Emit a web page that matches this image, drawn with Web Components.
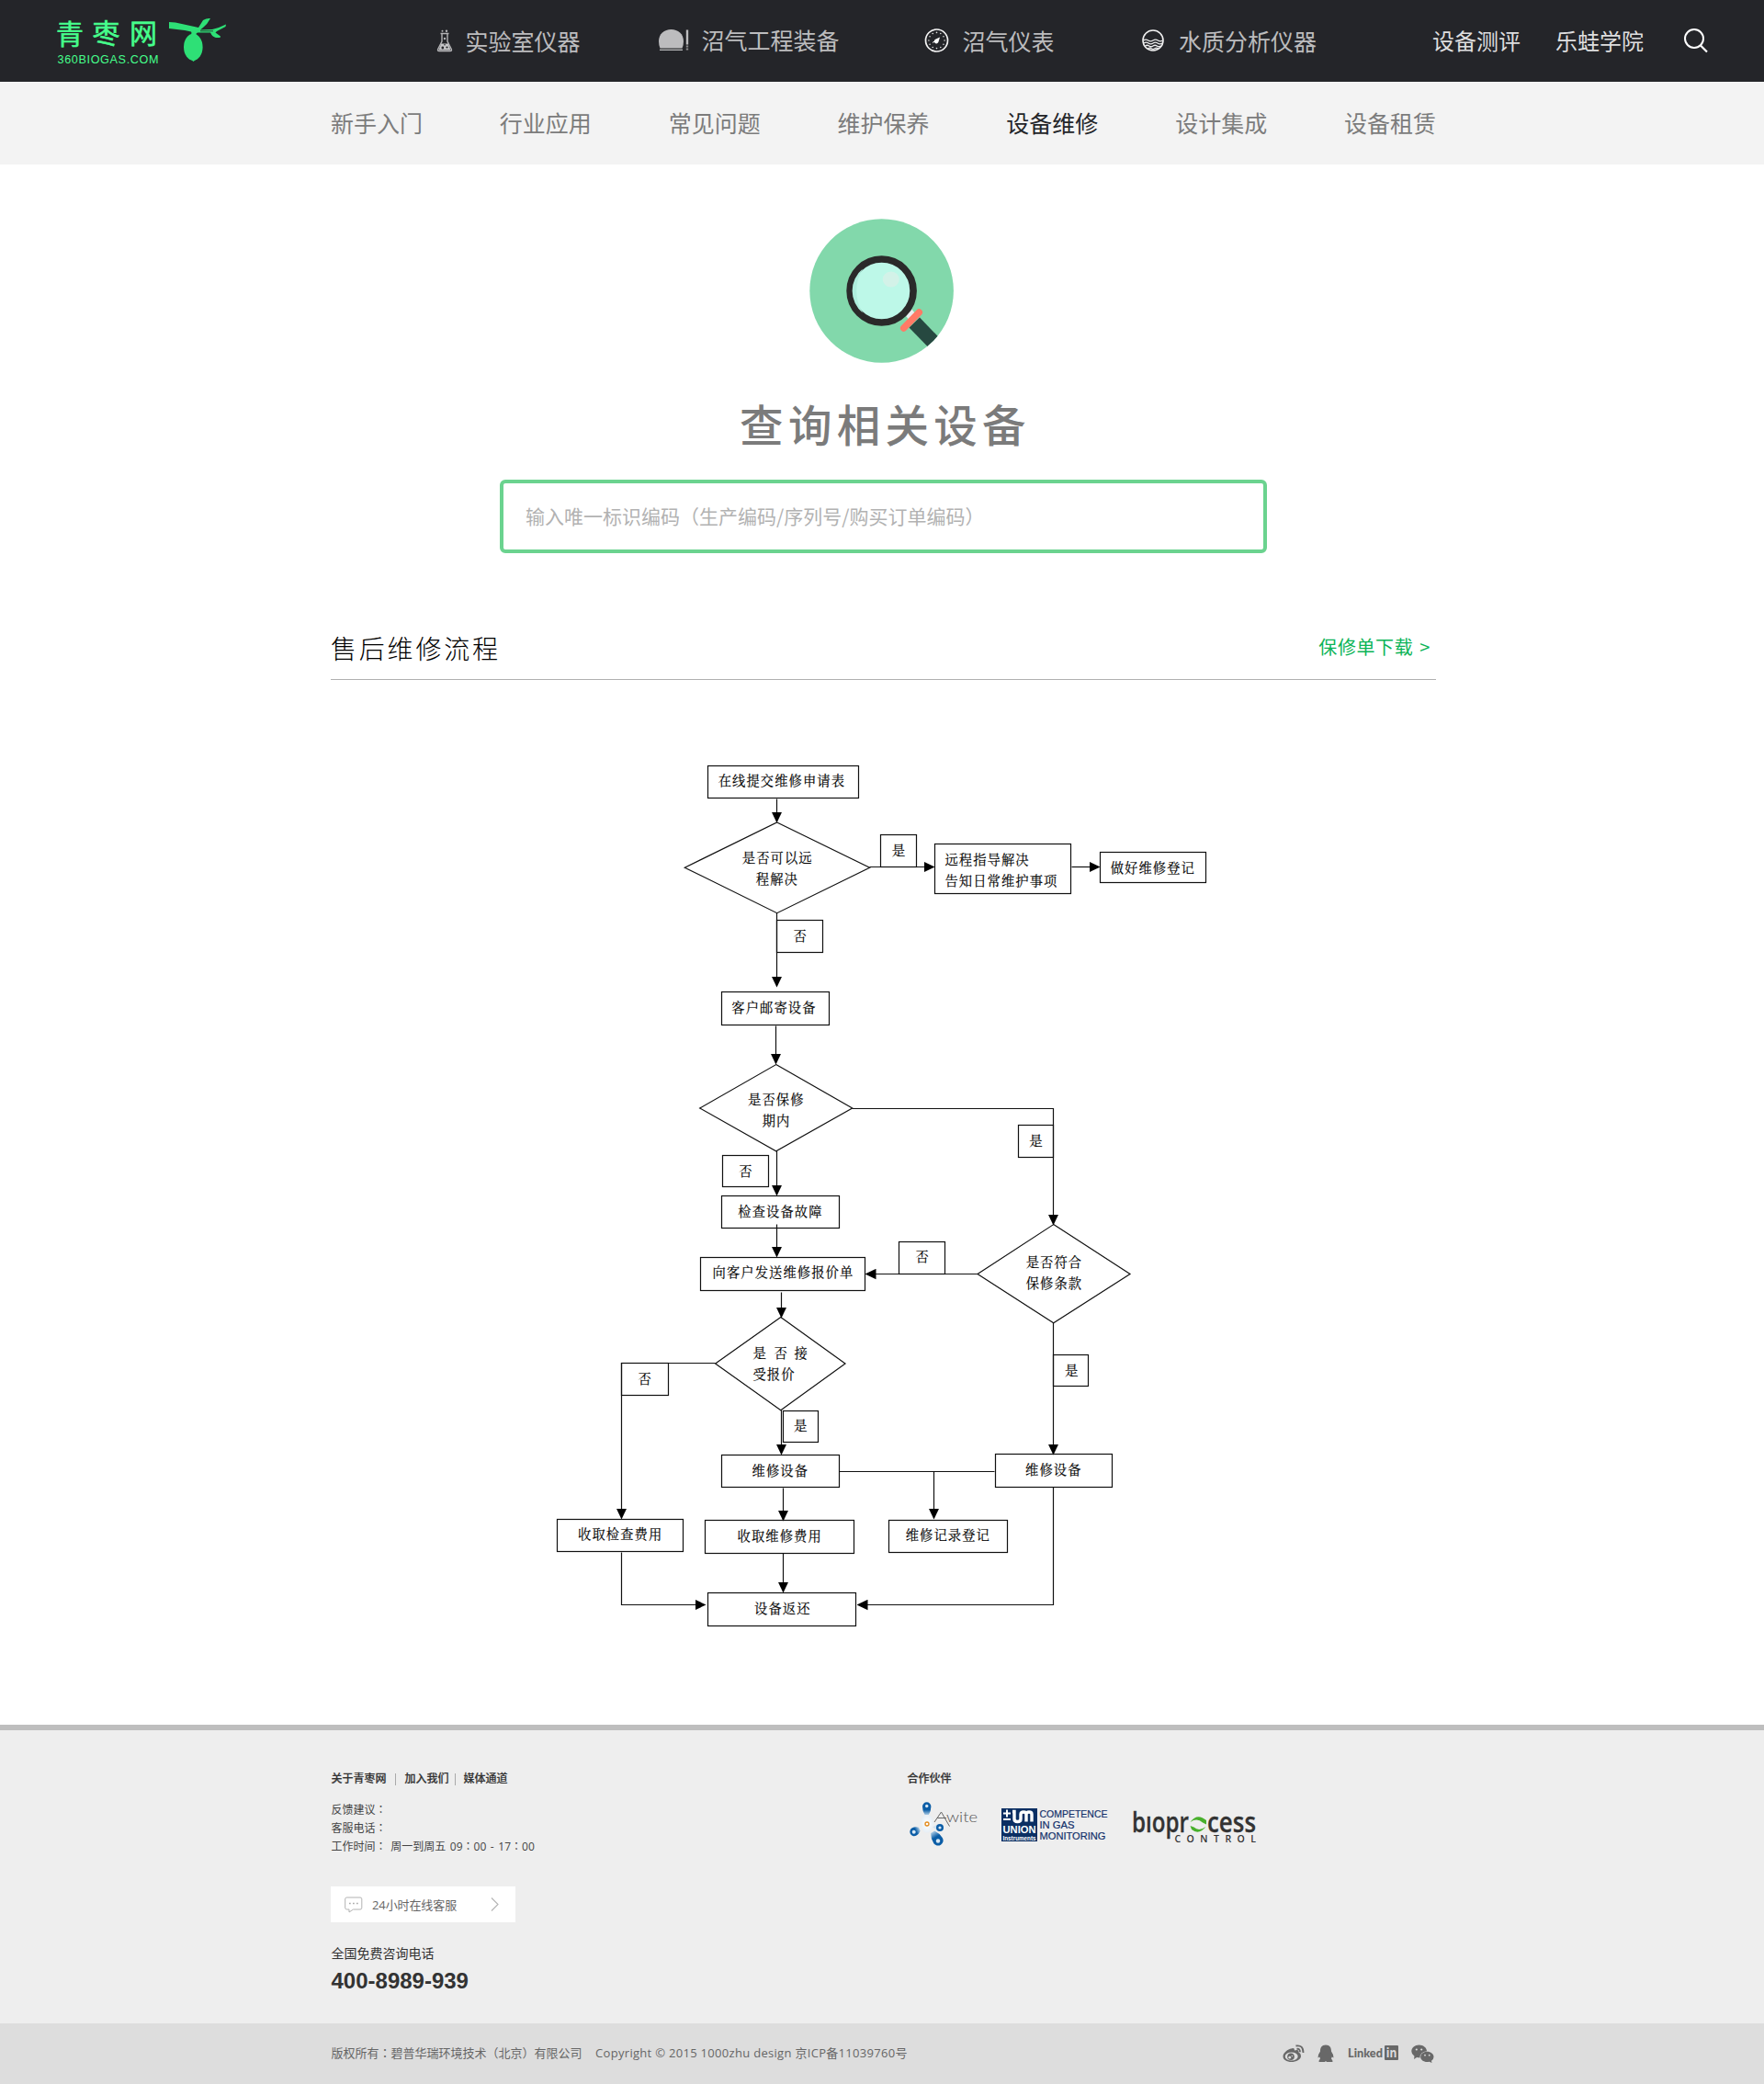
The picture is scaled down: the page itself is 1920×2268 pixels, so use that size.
<!DOCTYPE html>
<html lang="zh-CN">
<head>
<meta charset="utf-8">
<title>设备维修 - 青枣网</title>
<style>
html,body{margin:0;padding:0;background:#fff}
body{width:1920px;font-family:"Noto Sans CJK SC",sans-serif;-webkit-font-smoothing:antialiased}
</style>
</head>
<body>
<page-shell>
  <site-header slot="header">
    <nav-entry icon="flask" style="--before:225px;--gap:13.5px">实验室仪器</nav-entry>
    <nav-entry icon="dome" style="--before:85.5px;--gap:13.5px;--lift:-3px">沼气工程装备</nav-entry>
    <nav-entry icon="gauge" style="--before:92.5px;--gap:14.5px">沼气仪表</nav-entry>
    <nav-entry icon="water" style="--before:95.5px;--gap:16px">水质分析仪器</nav-entry>
    <nav-entry style="--before:126px;--size:24px;--ink:#dededf">设备测评</nav-entry>
    <nav-entry style="--before:38px;--size:24px;--ink:#dededf">乐蛙学院</nav-entry>
    <ui-icon name="search" style="margin-left:44px"></ui-icon>
  </site-header>
  <sub-nav slot="header">
    <sub-item>新手入门</sub-item><sub-item>行业应用</sub-item><sub-item>常见问题</sub-item><sub-item>维护保养</sub-item><sub-item active>设备维修</sub-item><sub-item>设计集成</sub-item><sub-item>设备租赁</sub-item>
  </sub-nav>
  <device-search heading="查询相关设备" hint="输入唯一标识编码（生产编码/序列号/购买订单编码）"></device-search>
  <section-title>售后维修流程<span slot="link">保修单下载</span><span slot="link" style="margin-left:7px">&gt;</span></section-title>
  <repair-flow></repair-flow>
  <site-footer slot="footer"></site-footer>
</page-shell>

<script>
const def = (name, html, after) => {
  const t = document.createElement('template');
  t.innerHTML = html;
  customElements.define(name, class extends HTMLElement {
    constructor(){ super(); this.attachShadow({mode:'open'}).append(t.content.cloneNode(true)); }
    connectedCallback(){ if (after) after(this, this.shadowRoot); }
  });
};

const dots = Array.from({length:12},(_,i)=>{const a=i*Math.PI/6;return `<circle cx="${(13.5+8.6*Math.cos(a)).toFixed(2)}" cy="${(13+8.6*Math.sin(a)).toFixed(2)}" r=".8" fill="#ddd"/>`}).join('');

const ICONS = {
  logo:[190,56,`<g fill="#46ff8c" stroke="#46ff8c" stroke-width=".5" font-family="Noto Sans CJK SC,sans-serif" font-weight="400" font-size="30" text-anchor="middle"><text x="16" y="31.500">青</text><text x="55.500" y="31">枣</text><text x="96" y="30.500">网</text></g>
    <text x="2.500" y="53" fill="#46ff8c" font-family="Liberation Sans,sans-serif" font-size="12.600" textLength="110">360BIOGAS.COM</text>
    <g fill="#2ee076"><path d="M124 8 L131 8.400 L147 12 L156 14 L161 6 Q165 3.500 169 4 Q166 10 161 14 L158 16.500 L171 16 L178 14 L186 10.500 L185.500 13 L176 18 L174.500 19.500 L180 23.500 L179.500 25 L175 25 Q171 24 169 19.500 L155 19.500 Q153 20 153.500 22 L148.500 22 Q149 20 148 18.500 L141 17 L124 15Z"/><path d="M148.500 20h4.500v3h-4.500z"/><ellipse cx="150.300" cy="35.200" rx="10.300" ry="14.500"/><path d="M147.500 48.500l3 2.600l3-2.600z"/></g><path d="M158 17.800h14" stroke="#242529" stroke-width=".8"/>`],
  flask:[18,25,`<path d="M4.500 4.500h9M6 5v8L1.700 21.500Q1 23.500 3 23.500H15Q17 23.500 16.300 21.500L12 13V5" fill="none" stroke="#b4b4b6" stroke-width="1.400"/><circle cx="6.500" cy="1.700" r="1" fill="#b4b4b6"/><circle cx="11" cy="1.700" r="1.200" fill="#b4b4b6"/><circle cx="9" cy="10" r="1.200" fill="#b4b4b6"/><path d="M5.200 15.500H12.800L15.500 22.500H2.500Z" fill="#c6c6c8"/><circle cx="6.800" cy="20" r="1.400" fill="#242529"/><circle cx="11.500" cy="19.500" r="1.100" fill="#242529"/><circle cx="9" cy="16.800" r=".8" fill="#242529"/>`],
  dome:[33,24,`<path d="M1.500 20.500Q0 17 0 13C0 5 6 0 13.500 0S27 5 27 13Q27 17 25.500 20.500Z" fill="#bcbcbe"/><path d="M1 22.300h25" stroke="#bcbcbe" stroke-width="1.300"/><path d="M31 .5v16" stroke="#bcbcbe" stroke-width="2.400"/><path d="M31 17.500v6" stroke="#8c8c8e" stroke-width="2.400" stroke-dasharray="2 1"/>`],
  gauge:[27,26,`<circle cx="13.500" cy="13" r="12" fill="none" stroke="#f4f4f4" stroke-width="1.700"/>${dots}<path d="M17 9.500L15.500 14.500A2.400 2.400 0 1 1 12.200 11.800Z" fill="#fff"/><path d="M9 15.500l3-2" stroke="#fff"/>`],
  water:[24,24,`<circle cx="12" cy="12" r="11" fill="none" stroke="#f0f0f0" stroke-width="1.600"/><g fill="none" stroke="#eee" stroke-width="1.300"><path d="M1.500 12q2.600-1.600 5.200 0t5.300 0t5.300 0t5.200 0M2 15q2.500-1.600 5 0t5 0t5 0t5 0M3.500 18q2.100-1.500 4.200 0t4.300 0t4.300 0t4.200 0M6.500 20.700q1.900-1.300 3.700 0t3.700 0t3.600 0"/></g>`],
  search:[26,27,`<circle cx="11" cy="11" r="10" fill="none" stroke="#fff" stroke-width="2"/><path d="M18 18.500l7 7" stroke="#fff" stroke-width="2.200"/>`],
  lens:[158,157,`<defs><clipPath id="c"><circle cx="78.600" cy="78.500" r="78.300"/></clipPath></defs><circle cx="78.600" cy="78.500" r="78.300" fill="#82d8ab"/>
    <path d="M101 101l8-5 8 9-7 7z" fill="#e8eef0"/><g clip-path="url(#c)"><path d="M120 107.500L160 149L149 160L108.500 118.500Z" fill="#264840"/></g>
    <circle cx="78.600" cy="78.500" r="34.500" fill="#bdf8e8" stroke="#2a2a2a" stroke-width="7.600"/><path d="M58 54.500A31 31 0 0 0 58 102.500A46 46 0 0 1 58 54.500Z" fill="#aeeedd"/><ellipse cx="88.800" cy="66" rx="9" ry="8.600" fill="#d3f2e8"/>
    <path d="M119.300 102L102.700 119" stroke="#ff7a66" stroke-width="7.500" stroke-linecap="round"/>`],
  chat:[20,18,`<path d="M2.500 1h14.500q1.800 0 1.800 1.800v9.400q0 1.800-1.800 1.800H9.500l-4.500 3v-3H2.500Q.7 14 .7 12.200V2.800Q.7 1 2.500 1Z" fill="none" stroke="#b2b2b2"/><path d="M5 7.500h1.700M9 7.500h1.700M13 7.500h1.700" stroke="#aaa" stroke-width="1.500"/>`],
  chevron:[9,15,`<path d="M1 .5l7 7-7 7" fill="none" stroke="#b4b4b4" stroke-width="1.100"/>`],
  awite:[76,52,`<defs><radialGradient id="h"><stop offset="0" stop-color="#fff"/><stop offset="1" stop-color="#e6eef5"/></radialGradient><linearGradient id="l" x1="0" x2="0" y1="0" y2="1"><stop offset=".6" stop-color="#0b5da6"/><stop offset="1" stop-color="#a9cae4"/></linearGradient></defs>
    <ellipse cx="20" cy="24.500" rx="7" ry="10" fill="url(#h)"/>
    <path d="M15 6a4.700 4.700 0 0 1 9.400 0q0 5-2.600 9h-4.200Q15 11 15 6Z" fill="url(#l)"/>
    <g transform="translate(6 33.500) rotate(-116)"><path d="M-4.700 0a4.700 4.700 0 0 1 9.400 0q0 3.500-2.600 6.500h-4.200Q-4.700 3.500-4.700 0Z" fill="url(#l)"/></g>
    <g transform="translate(32 43) rotate(148)"><path d="M-5.600 0a5.600 5.600 0 0 1 11.200 0q0 6-3.200 11h-4.800Q-5.600 6-5.600 0Z" fill="url(#l)"/></g>
    <path d="M26 28.500l5-3v6z" fill="#cfe1f0"/><circle cx="34" cy="29" r="4" fill="#0b5da6"/>
    <g fill="#d9e8f4"><circle cx="19.700" cy="5.500" r="1.700"/><circle cx="5.700" cy="33.700" r="2"/><circle cx="32" cy="43.500" r="2.200"/><circle cx="34" cy="29" r="1.600"/></g>
    <circle cx="20" cy="25" r="2" fill="#fff" stroke="#e28a1c" stroke-width="1.300"/>
    <path d="M28 23L35.500 12L44.500 27.500M31 18.500H41" fill="none" stroke="#666" stroke-width="1"/>
    <text x="41" y="23" font-family="Lato,sans-serif" font-weight="300" font-size="15" fill="#555" textLength="34" lengthAdjust="spacingAndGlyphs">wite</text>`],
  union:[118,38,`<rect y="1" width="39" height="36" fill="#0b2f63"/><g fill="#fff"><path d="M2 5.500h3v-3h2v3h3v2h-3v3h-2v-3h-3zM2 12h8v2h-8z"/></g><path d="M12 4.500h2v8q0 3 3.500 3t3.500-3v-5q0-2.500 3-2.500t3 2.500v8M27 7.500q0-2.500 3-2.500t3 2.500v8" fill="none" stroke="#fff" stroke-width="3.400"/>
    <text x="1.500" y="28.300" font-family="Liberation Sans,sans-serif" font-weight="700" font-size="10.500" fill="#fff" textLength="36" lengthAdjust="spacingAndGlyphs">UNION</text><text x="1.500" y="35.500" font-family="Liberation Sans,sans-serif" font-weight="700" font-size="6.500" fill="#fff" textLength="36" lengthAdjust="spacingAndGlyphs">Instruments</text>
    <g font-family="Liberation Sans,sans-serif" font-size="11.600" fill="#12306a" stroke="#12306a" stroke-width=".2"><text x="41.500" y="11" textLength="74" lengthAdjust="spacingAndGlyphs">COMPETENCE</text><text x="41.500" y="23" textLength="38" lengthAdjust="spacingAndGlyphs">IN GAS</text><text x="41.500" y="35" textLength="72" lengthAdjust="spacingAndGlyphs">MONITORING</text></g>`],
  bio:[136,44,`<g font-family="Open Sans,sans-serif" font-weight="600" font-size="31" fill="#333" stroke="#333" stroke-width=".3"><text x="-1" y="27.500" textLength="62" lengthAdjust="spacingAndGlyphs">bıopr</text><text x="81" y="27.500" textLength="53" lengthAdjust="spacingAndGlyphs">cess</text></g>
    <path d="M62.500 17Q70 6.500 80 15L80 19.500L76 17.500Q70 12 62.500 17ZM79.500 22Q72 31.500 64 25L62.500 21L66.500 22.500Q72 27.500 79.500 22Z" fill="#48b02c"/>
    <text x="45.500" y="39" font-family="Open Sans,sans-serif" font-weight="600" font-size="10.500" fill="#333" textLength="88.500">CONTROL</text>`],
  weibo:[24,20,`<path d="M9.500 4.500Q13 3 13 6.500Q18 5 17.500 8.500Q20 9.300 20 12.500C20 16.500 14.500 19 9.700 19C4.500 19 .5 16.500 .5 13C.5 9 6 5 9.500 4.500Z" fill="#686868"/><ellipse cx="9.700" cy="13" rx="7" ry="4.500" fill="#ddd"/><circle cx="9" cy="13.300" r="3.800" fill="#686868"/><circle cx="7.800" cy="14.200" r="1.400" fill="#ddd"/><circle cx="10.300" cy="12.500" r=".7" fill="#ddd"/><path d="M14.500 1.500Q22.500 0 22.500 9M15.500 4.800Q19 4.300 19 8.300" fill="none" stroke="#686868" stroke-width="1.800"/>`],
  qq:[20,20,`<path d="M10 .5C14.500 .5 16 3.700 16 7.500Q18.700 11 18.500 14.500L16.700 13.500L16 15.500Q17.800 17 17.500 19H11L10 18L9 19H2.500Q2.200 17 4 15.500L3.300 13.500L1.500 14.500Q1.300 11 4 7.500C4 3.700 5.500 .5 10 .5Z" fill="#686868"/>`],
  linkedin:[57,20,`<text x="1" y="14" font-family="Lato,sans-serif" font-weight="900" font-size="13" fill="#686868" textLength="38" lengthAdjust="spacingAndGlyphs">Linked</text><rect x="41" y="1" width="15" height="16" rx="1" fill="#686868"/><text x="42.800" y="14" font-family="Open Sans,sans-serif" font-weight="700" font-size="13.500" fill="#ddd" textLength="11.500" lengthAdjust="spacingAndGlyphs">in</text>`],
  wechat:[25,21,`<path d="M8.500 .5C13 .5 16.700 3.300 17 7.200Q9.500 8 9.500 14.500L6 14L3 16L3.500 12.700Q.3 10.500 .3 7.500C.3 3.700 4 .5 8.500 .5Z" fill="#686868"/><path d="M17.300 7.800C21.300 7.800 24.500 10.300 24.500 13.500Q24.500 16 22 17.800L22.500 20L19.700 18.700Q18.500 19 17.300 19C13.300 19 10.200 16.600 10.200 13.500S13.300 7.800 17.300 7.800Z" fill="#686868"/><g fill="#ddd"><circle cx="5.800" cy="5.500" r="1.100"/><circle cx="11.200" cy="5.500" r="1.100"/><circle cx="15" cy="11.700" r=".9"/><circle cx="19.700" cy="11.700" r=".9"/></g>`]
};

def('ui-icon', `<style>:host{display:block;flex:none}svg{display:block;overflow:visible}</style>`, (el, root) => {
  const [w,h,body] = ICONS[el.getAttribute('name')];
  const box = document.createElement('div');
  box.innerHTML = `<svg width="${w}" height="${h}" viewBox="0 0 ${w} ${h}">${body}</svg>`;
  root.append(box.firstChild);
});

def('page-shell', `<style>:host{display:flex;flex-direction:column;min-height:2268px}main{display:flex;flex-direction:column;flex:1}</style><slot name="header"></slot><main><slot></slot></main><slot name="footer"></slot>`);

def('site-header', `<style>:host{display:flex;align-items:center;box-sizing:border-box;height:89px;padding:0 0 1px 60px;background:#242529}</style><ui-icon name="logo"></ui-icon><slot></slot>`);

def('nav-entry', `<style>:host{display:flex;align-items:center;flex:none;margin-left:var(--before);gap:var(--gap,0);font-size:var(--size,25px);line-height:36px;color:var(--ink,#bcbcbe);white-space:nowrap}span{display:block;margin-top:var(--lift,-1px)}</style><span><slot></slot></span>`, (el, root) => {
  if (!el.hasAttribute('icon')) return;
  const i = document.createElement('ui-icon');
  i.setAttribute('name', el.getAttribute('icon'));
  root.querySelector('span').before(i);
});

def('sub-nav', `<style>:host{display:block;box-sizing:border-box;height:90px;padding:26px 357px 0 360px;background:#f3f3f3}nav{display:flex;justify-content:space-between}</style><nav><slot></slot></nav>`);
def('sub-item', `<style>:host{display:block;font-size:25px;line-height:36px;color:#7c7c7c}:host([active]){color:#242529}</style><slot></slot>`);

def('device-search', `<style>:host{display:flex;flex-direction:column;align-items:center;padding-top:59px}
h1{margin:36px 0 31px;font-size:47.500px;font-weight:500;line-height:60px;letter-spacing:5.300px;text-indent:7px;color:#7b7b7b}
div{box-sizing:border-box;width:835px;height:80px;margin-left:3px;padding-left:24px;border:4px solid #6bd38f;border-radius:6px;font-size:21px;line-height:70px;color:#b2b2b2;white-space:nowrap}</style>
<ui-icon name="lens"></ui-icon><h1></h1><div></div>`, (el, root) => {
  root.querySelector('h1').textContent = el.getAttribute('heading');
  root.querySelector('div').textContent = el.getAttribute('hint');
});

def('section-title', `<style>:host{display:flex;justify-content:space-between;box-sizing:border-box;width:1203px;margin:82px 0 0 360px;height:56px;border-bottom:1px solid #b0b0b0}
h2{margin:0;font-size:28px;font-weight:300;line-height:42px;letter-spacing:2.800px;color:#000}
a{display:flex;font-size:20px;line-height:40px;letter-spacing:.600px;color:#0bb457;padding-right:6px}</style><h2><slot></slot></h2><a><slot name="link"></slot></a>`);

/* Flow chart: coordinates are page units on one free canvas */
const boxes = [[769.8,832.5,935,869],[958.4,908,997.6,943.5],[1017,918,1166.4,973],[1197.4,926.6,1312.7,961],[845.4,1001.4,896,1037],[784.8,1079.4,902.6,1116],[1108.4,1224.4,1147,1259.6],[785.6,1256.6,836.6,1292.4],[784.6,1300.6,913.6,1337.4],[761.6,1368.4,941.6,1404.6],[978.4,1351.4,1029.4,1386.7],[676.4,1483.4,727.5,1518.6],[852.4,1535.4,891,1570.4],[784.8,1582.5,913.6,1619],[1082.5,1582,1211.4,1618.6],[1146.4,1474.4,1185.2,1509.4],[606.4,1652.6,743.6,1689],[767.4,1654.4,930,1690.6],[967,1654.4,1096.5,1690.4],[769.6,1733.4,932.2,1769.6]];
const diamonds = [[845.7,895,946.6,944.2,845.7,993.7,745.3,944.2],[844.7,1158.6,927.7,1206,844.7,1252.7,761.7,1206],[1146.7,1332.6,1230,1386.4,1146.7,1439.7,1064,1386.4],[849.8,1433.4,920,1484,849.8,1534.7,778.6,1484]];
const wires = [['M845.7 869V893','d'],['M946.6 943.5H1015','r'],['M1166.4 943.5H1195','r'],['M845.7 993.7V1072','d'],['M844.3 1116V1156','d'],['M845.5 1252.7V1299','d'],['M927.7 1206.4H1146.7V1331','d'],['M845.5 1332V1366','d'],['M1064 1386.7H943','l'],['M850.3 1406V1432','d'],['M778.6 1483.4H676.4V1651','d'],['M850.2 1534.7V1581','d'],['M1146.7 1439.7V1581','d'],['M913.6 1601.4H1082.5',''],['M1016.8 1601V1651','d'],['M852.3 1619V1653','d'],['M852.5 1690.6V1731','d'],['M676.4 1689V1746.500H766','r'],['M1146.7 1618.6V1746.500H934','l']];
const labels = [['在线提交维修申请表',781.7,849.7],['是否可以远',807.8,933.7],['程解决',822.8,957],['是',970.7,925.7],['远程指导解决',1028.4,935.7],['告知日常维护事项',1028.4,959],['做好维修登记',1208.7,945],['否',863.5,1019],['客户邮寄设备',796.3,1096.7],['是否保修',814,1197],['期内',829.7,1220],['否',804.3,1275],['检查设备故障',803.3,1319],['是',1120.3,1241.7],['否',996.5,1368],['向客户发送维修报价单',775.5,1385],['是否符合',1116.7,1374],['保修条款',1116.7,1397],['是',819.4,1473],['否',842.5,1473],['接',864.6,1473],['受报价',819.4,1496],['否',694.4,1500.7],['是',864,1552],['是',1159,1491.7],['维修设备',818.5,1601],['维修设备',1116,1600],['收取检查费用',629,1669.7],['收取维修费用',802.6,1671.7],['维修记录登记',985.7,1670.7],['设备返还',821,1751]];
def('repair-flow', `<style>:host{display:block;height:1137px}svg{display:block}path,rect,polygon{fill:none;stroke:#111;stroke-width:1.200}marker path{fill:#000;stroke:none}text{font:14.300px "Noto Serif CJK SC","Noto Sans CJK SC",serif;letter-spacing:1.080px;fill:#000;stroke:#000;stroke-width:.150px}</style>
<svg width="1920" height="1137" viewBox="0 740 1920 1137"><defs><marker id="a" viewBox="0 0 12 12" refX="10" refY="6" markerWidth="12" markerHeight="12" markerUnits="userSpaceOnUse" orient="auto"><path d="M0 .3L12 6L0 11.700Z"/></marker></defs>
${boxes.map(([a,b,c,d])=>{const x=Math.round(a)+.5,y=Math.round(b)+.5;return `<rect x="${x}" y="${y}" width="${Math.round(c)-.5-x}" height="${Math.round(d)-.5-y}"/>`}).join('')}
${diamonds.map(d=>`<polygon points="${d}"/>`).join('')}
${wires.map(([d,m])=>`<path d="${d.replace(/[\d.]+/g,n=>Math.floor(n)+.5)}"${m?' marker-end="url(#a)"':''}/>`).join('')}
${labels.map(([t,x,y])=>`<text x="${x.toFixed(1)}" y="${(y+5.4).toFixed(1)}">${t}</text>`).join('')}</svg>`);

def('online-service', `<style>:host{display:flex;align-items:center;box-sizing:border-box;width:201px;height:39px;margin-left:-.5px;padding:0 18px 0 15px;background:#fff;font-size:13px;line-height:20px;color:#666}span{margin:0 auto 0 10px;letter-spacing:-.1px}</style><ui-icon name="chat"></ui-icon><span><slot></slot></span><ui-icon name="chevron"></ui-icon>`);

def('site-footer', `<style>:host{display:block;font-family:"Open Sans","Noto Sans CJK SC",sans-serif;color:#333}
.top{display:flex;box-sizing:border-box;height:325px;padding:43px 0 0 360.500px;border-top:6px solid #bebebe;background:#eee}
.about{width:627px}.links{display:flex;align-items:center;font-size:12px;line-height:20px;font-weight:500;-webkit-text-stroke:.2px #333}
i{width:1px;height:13px;background:#aaa}
p{margin:0;height:20px;font-size:12px;line-height:20px;color:#444;word-spacing:1.500px}.info{margin:14px 0 33px}
b{font-family:"Noto Sans CJK TC",sans-serif;font-weight:400;line-height:0}
.tel{margin-top:24px;font-size:14px;color:#333}
strong{display:block;margin-top:6px;font:700 24px/28px "Liberation Sans",sans-serif}
h3{margin:0;font-size:12px;line-height:20px;font-weight:500;-webkit-text-stroke:.2px #333}
.logos{display:flex;align-items:flex-start;padding-top:14px}
.bar{display:flex;align-items:center;box-sizing:border-box;height:66px;padding:0 359px 2px 360.500px;background:#ddd;color:#666;font-size:13px;line-height:20px;white-space:nowrap}
.bar ui-icon{margin-top:2px}
.c{margin-left:14.500px;margin-right:auto;letter-spacing:.3px}</style>
<div class="top"><div class="about">
<div class="links"><span>关于青枣网</span><i style="margin:0 9.500px"></i><span>加入我们</span><i style="margin:0 9px 0 6px"></i><span>媒体通道</span></div>
<div class="info"><p>反馈建议<b lang="zh-TW">：</b></p><p>客服电话<b lang="zh-TW">：</b></p><p>工作时间<b lang="zh-TW">：</b> 周一到周五 09<b lang="zh-TW">：</b>00 - 17<b lang="zh-TW">：</b>00</p></div>
<online-service>24小时在线客服</online-service>
<p class="tel">全国免费咨询电话</p><strong>400-8989-939</strong></div>
<div><h3>合作伙伴</h3><div class="logos"><ui-icon name="awite" style="margin-left:1.500px"></ui-icon><ui-icon name="union" style="margin:7px 0 0 25px"></ui-icon><ui-icon name="bio" style="margin:6px 0 0 25px"></ui-icon></div></div></div>
<div class="bar"><span>版权所有<b lang="zh-TW">：</b>碧普华瑞环境技术<b lang="zh-TW">（</b>北京<b lang="zh-TW">）</b>有限公司</span><span class="c">Copyright © 2015 1000zhu design 京ICP备11039760号</span>
<ui-icon name="weibo"></ui-icon><ui-icon name="qq" style="margin-left:13px"></ui-icon><ui-icon name="linkedin" style="margin-left:13px"></ui-icon><ui-icon name="wechat" style="margin-left:13px"></ui-icon></div>`);
</script>
</body>
</html>
